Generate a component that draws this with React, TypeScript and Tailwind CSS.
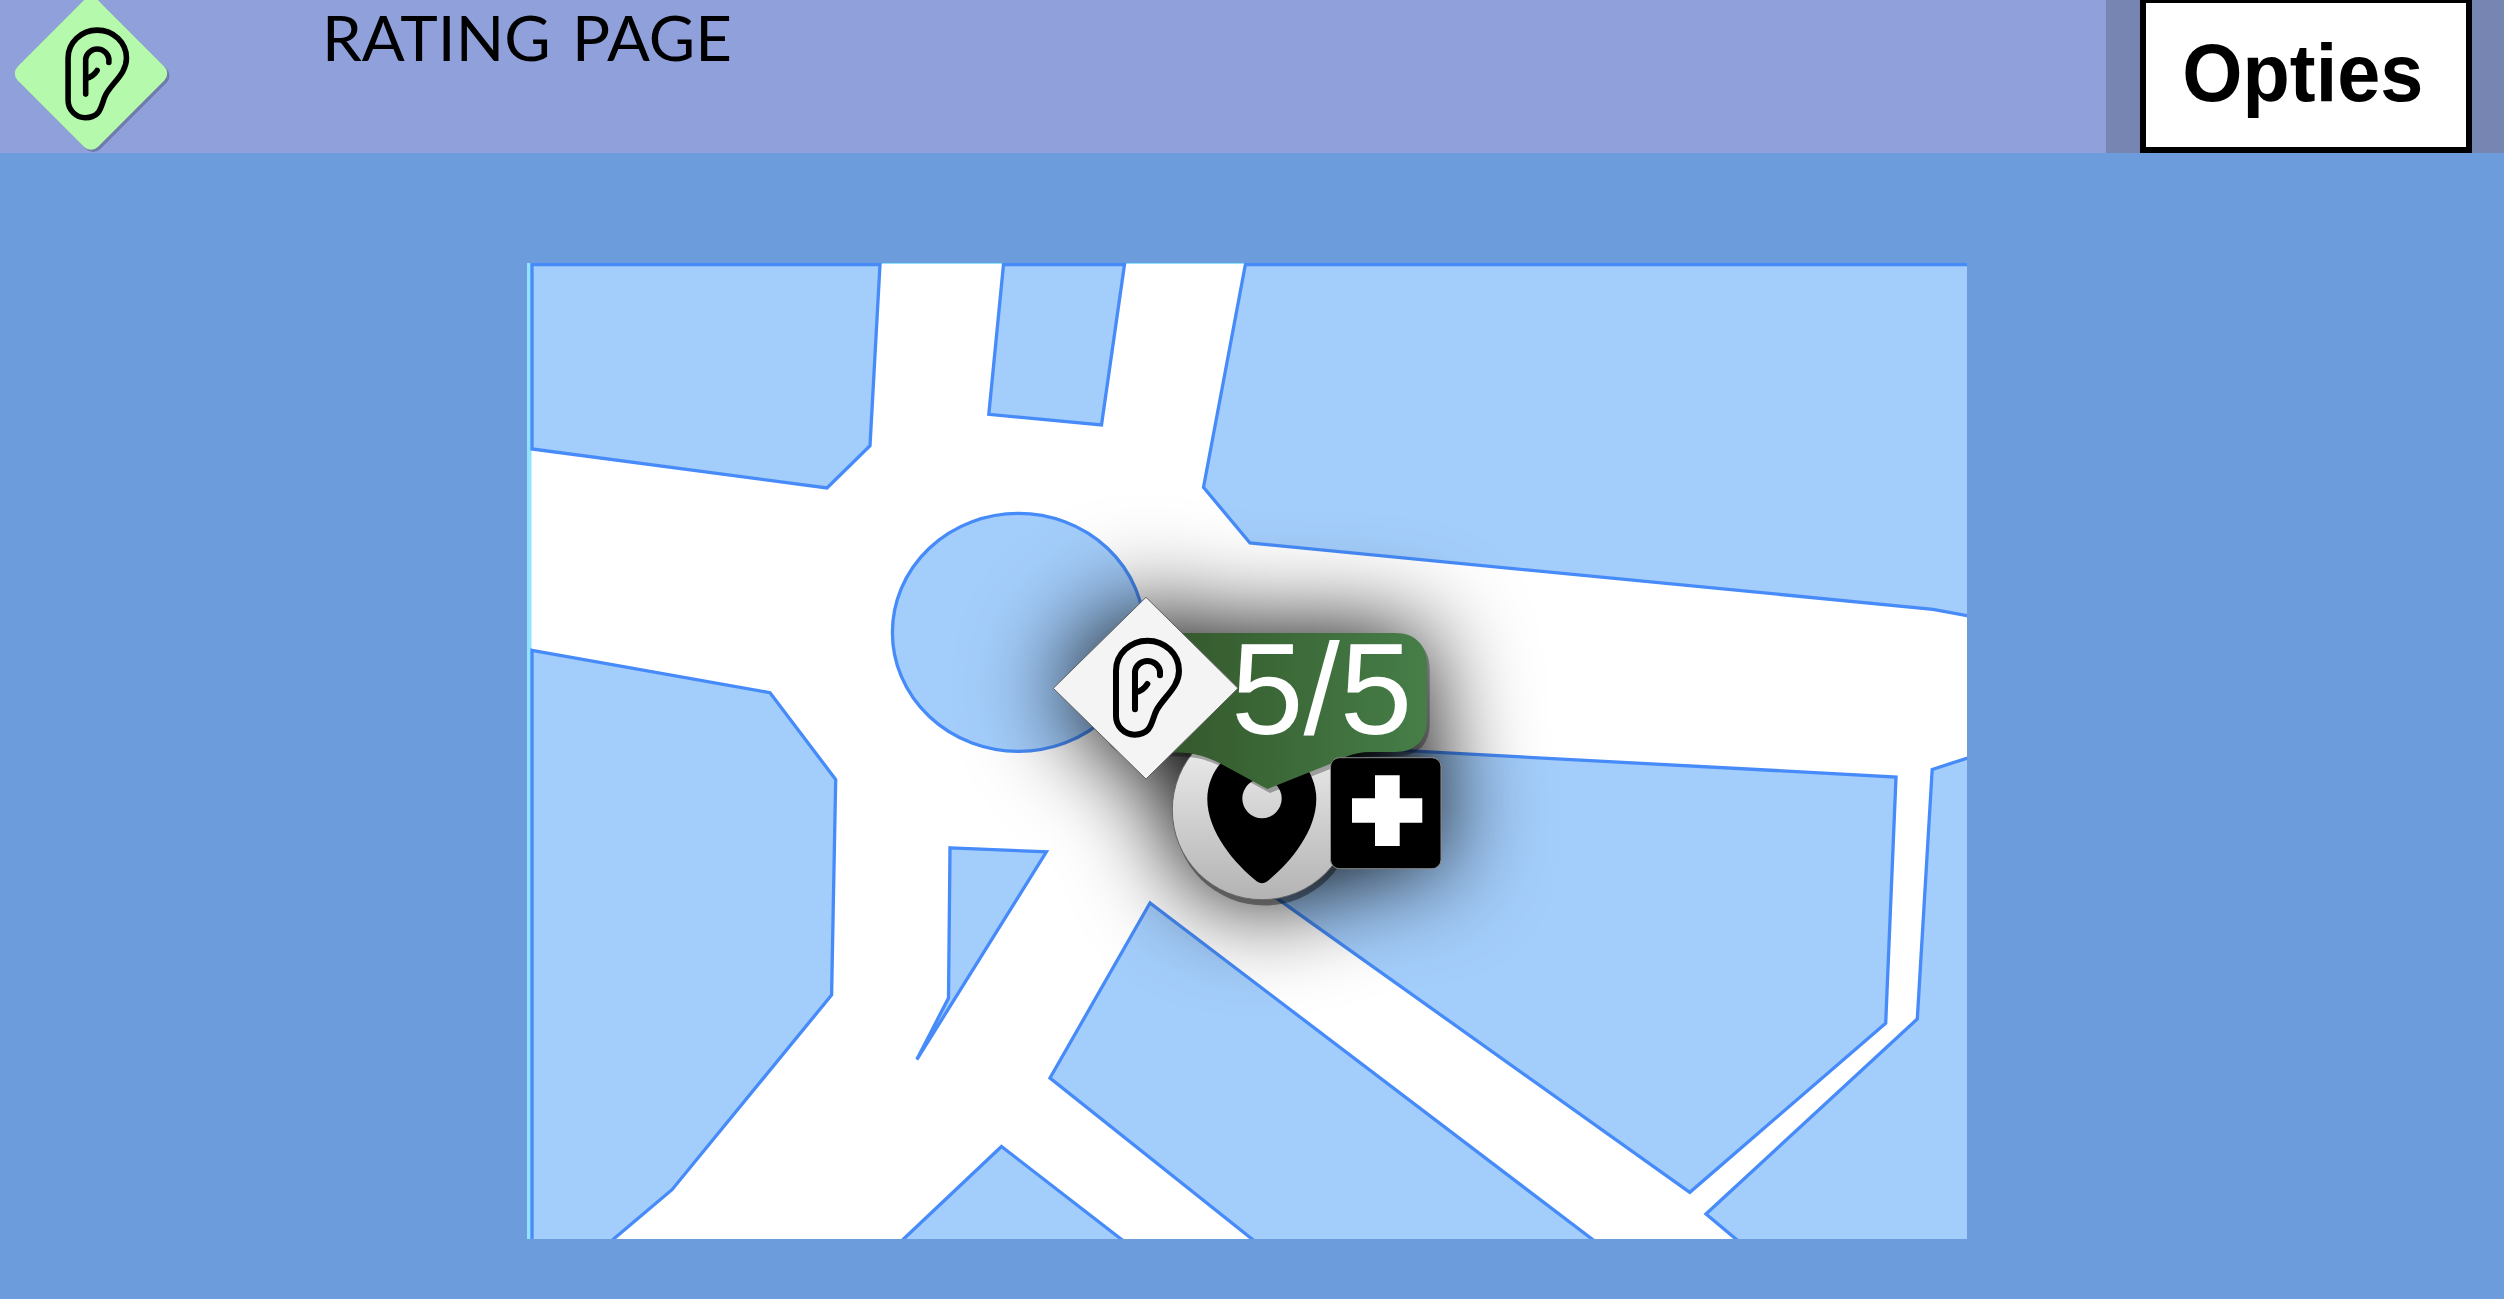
const BLOCKS = [
  "532,264.5 880,264.5 870,445.7 827,488 532,449",
  "1003.5,264.5 1124.5,264.5 1101.5,425 988.8,414.3",
  "1245.4,264.5 1980,264.5 1980,618 1967,615.7 1933,609.3 1250,543 1203.5,487.3",
  "532,650.3 770,692.7 835.7,779.5 831.6,995 672,1189.7 613,1239.5 590,1258 532,1258",
  "950,847.8 1046.4,851.9 916.8,1059.6 948.5,998",
  "1001.5,1146.5 1121,1239 1146,1258.5 883,1258.5 903.6,1239",
  "1150,903 1050,1078 1252,1239 1277,1259 1618,1259 1592,1239",
  "1240,741.8 1896,777 1885.7,1023.2 1689.8,1192.3 1240,872",
  "1932.2,769.5 1980,753.9 1980,1260 1761,1260 1706,1214 1917.3,1018.9",
];

const CARD =
  "M1134 633H1395C1416 633 1427 646 1427 665V720C1427 739 1416 752 1395 752H1370C1352 752 1341 759 1330 764L1267.3 789L1223 765C1210 758 1196 752.6 1177 752.6H1134C1112 752 1101 739 1101 720V665C1101 646 1112 633 1134 633Z";
const DIAMOND = "M1146 597.3L1238 688.3L1146 779L1053.3 688.3Z";

function EarStrokes() {
  return (
    <g fill="none" stroke="#000" strokeWidth="18" strokeLinecap="round" strokeLinejoin="round">
      <path d="M228 272A94.5 90 0 0 1 417 272C417 322 372 350 350 390C334 420 338 464 284 464A56 56 0 0 1 228 408Z" />
      <path d="M285 388V274A38 37 0 0 1 360 274V286" />
      <path d="M285 338Q310 332 322 312" />
    </g>
  );
}

function Logo() {
  return (
    <svg className="block h-[153px] w-[200px] shrink-0" viewBox="0 0 200 153" aria-label="Logo">
      <rect x="34.2" y="16.7" width="113.6" height="113.6" rx="10" transform="translate(2.3 2.3) rotate(45 91 73.5)" fill="#6f7cab" />
      <rect x="34.2" y="16.7" width="113.6" height="113.6" rx="10" transform="rotate(45 91 73.5)" fill="#b5faac" />
      <g transform="scale(.3333) translate(-7.1 -79.3) scale(.927 .932)">
        <EarStrokes />
      </g>
    </svg>
  );
}

function RatingMap() {
  return (
    <svg className="block h-[976px] w-[1440px]" viewBox="527 263 1440 976">
      <defs>
        <linearGradient id="card" gradientUnits="userSpaceOnUse" x1="1180" y1="0" x2="1427" y2="0">
          <stop offset="0" stopColor="#355a2d" />
          <stop offset="1" stopColor="#467e48" />
        </linearGradient>
        <linearGradient id="disc" x1="0" y1="0" x2="0" y2="1">
          <stop offset="0" stopColor="#f4f4f4" />
          <stop offset="1" stopColor="#b3b3b3" />
        </linearGradient>
        <filter id="glow" filterUnits="userSpaceOnUse" x="800" y="350" width="900" height="800">
          <feGaussianBlur stdDeviation="50" />
        </filter>
      </defs>
      <rect x="527" y="263" width="1440" height="976" fill="#90e4ff" />
      <rect x="531.5" y="264" width="1436" height="976" fill="#fff" />
      <g fill="#a3cdfb" stroke="#468bf9" strokeWidth="3.3">
        {BLOCKS.map((points) => (
          <polygon key={points} points={points} />
        ))}
        <ellipse cx="1018.4" cy="632.4" rx="126" ry="119" />
      </g>

      <g filter="url(#glow)">
        <path d={CARD} />
        <path d={DIAMOND} />
        <circle cx="1262" cy="810" r="92" />
        <rect x="1330" y="757" width="111" height="112" rx="10" />
      </g>

      <circle cx="1264.5" cy="815.5" r="90" fill="#000" fillOpacity=".4" />
      <circle cx="1262" cy="810" r="89.7" fill="url(#disc)" stroke="#666" />
      <path
        fillRule="evenodd"
        d="M1207.3 799C1207.3 832 1235 864 1257 881.5Q1262 885 1267 881.5C1289 864 1316.3 832 1316.3 799A54.5 54.5 0 0 0 1207.3 799ZM1242.3 798.5A19.7 19.7 0 1 1 1281.7 798.5A19.7 19.7 0 1 1 1242.3 798.5Z"
      />
      <path d={CARD} transform="translate(2.7 4)" fillOpacity=".3" />
      <path d={CARD} fill="url(#card)" />
      <rect x="1330.5" y="757.7" width="110.5" height="111" rx="9" fill="#000" stroke="#8c8c8c" />
      <path fill="#fff" d="M1375 775.3H1399.7V798.3H1422.3V822.7H1399.7V846H1375V822.7H1352V798.3H1375Z" />
      <path d={DIAMOND} fill="#f4f4f4" stroke="#606060" />
      <g transform="translate(1040 580) scale(.3333)">
        <EarStrokes />
      </g>
      <text x="1231" y="733.5" fill="#fff" fontSize="130.5" fontFamily="'Liberation Sans', Arial, sans-serif">
        5/5
      </text>
    </svg>
  );
}

export default function App() {
  return (
    <div className="flex h-[1299px] w-full flex-col overflow-hidden bg-[#6c9cdb]">
      <header className="flex h-[153px] shrink-0 overflow-hidden bg-[#90a0da]">
        <Logo />
        <h1 className="ml-[122px] flex-1 origin-left scale-x-[1.035] whitespace-nowrap font-['Lato',sans-serif] text-[61.4px] leading-[74px] font-normal [word-spacing:5px] text-black">
          RATING PAGE
        </h1>
        <div className="flex w-[398px] bg-[#7785b2] pl-[34px]">
          <button className="flex h-[153px] w-[332px] items-center justify-center border-x-[6.5px] border-t-[3px] border-b-[6.5px] border-black bg-white pr-[6px] pb-[4px] font-['Liberation_Sans',Arial,sans-serif] text-[81.5px] leading-none font-bold text-black">
            <span className="block scale-x-[.95]">Opties</span>
          </button>
        </div>
      </header>
      <main className="flex-1 pt-[110px] pl-[527px]">
        <RatingMap />
      </main>
    </div>
  );
}
